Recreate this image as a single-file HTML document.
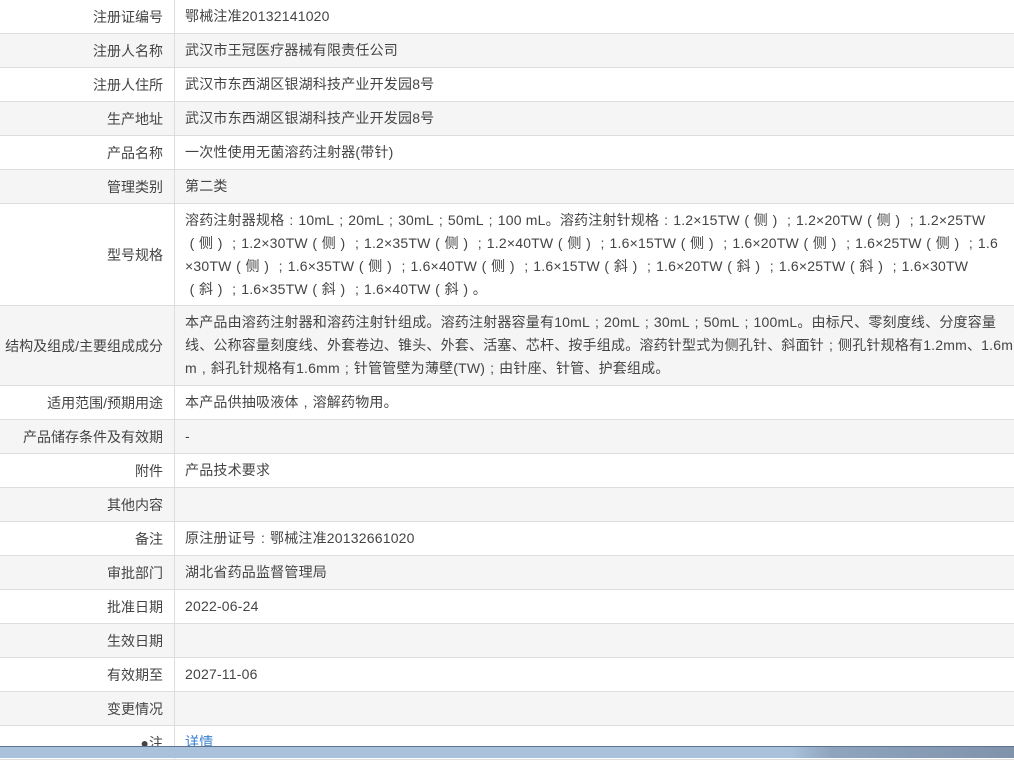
<!DOCTYPE html>
<html><head><meta charset="utf-8"><style>
*{margin:0;padding:0;box-sizing:border-box}
body{width:1014px;height:758px;overflow:hidden;background:#fff;font-family:"Liberation Sans","Noto Sans CJK SC",sans-serif;font-size:14px;color:#444;position:relative}
.r{display:flex;border-bottom:1px solid #ddd;height:34px}
.r:nth-child(even){background:#f5f5f5}
.l{width:175px;border-right:1px solid #ddd;text-align:right;padding-right:11px;display:flex;align-items:center;justify-content:flex-end;flex-shrink:0;white-space:nowrap}
.v{padding-left:10px;display:flex;align-items:center;line-height:23px;padding-right:0;white-space:nowrap;letter-spacing:0.2px}
i{font-style:normal;display:inline-block;width:14px;text-align:center}
.tb{position:absolute;left:0;top:746px;width:1014px;height:12px;background:linear-gradient(90deg,#a9c1db 0,#a9c1db 78%,#8fa4bd 82%,#7f93ab 100%);border-top:1px solid #5d7391}
</style></head><body>
<div>
<div class="r"><div class="l">注册证编号</div><div class="v">鄂械注准20132141020</div></div>
<div class="r"><div class="l">注册人名称</div><div class="v">武汉市王冠医疗器械有限责任公司</div></div>
<div class="r"><div class="l">注册人住所</div><div class="v">武汉市东西湖区银湖科技产业开发园8号</div></div>
<div class="r"><div class="l">生产地址</div><div class="v">武汉市东西湖区银湖科技产业开发园8号</div></div>
<div class="r"><div class="l">产品名称</div><div class="v">一次性使用无菌溶药注射器(带针)</div></div>
<div class="r"><div class="l">管理类别</div><div class="v">第二类</div></div>
<div class="r" style="height:102px"><div class="l">型号规格</div><div class="v"><div>溶药注射器规格<i>:</i>10mL<i>;</i>20mL<i>;</i>30mL<i>;</i>50mL<i>;</i>100 mL。溶药注射针规格<i>:</i>1.2×15TW<i>(</i>侧<i>)</i><i>;</i>1.2×20TW<i>(</i>侧<i>)</i><i>;</i>1.2×25TW<br><i>(</i>侧<i>)</i><i>;</i>1.2×30TW<i>(</i>侧<i>)</i><i>;</i>1.2×35TW<i>(</i>侧<i>)</i><i>;</i>1.2×40TW<i>(</i>侧<i>)</i><i>;</i>1.6×15TW<i>(</i>侧<i>)</i><i>;</i>1.6×20TW<i>(</i>侧<i>)</i><i>;</i>1.6×25TW<i>(</i>侧<i>)</i><i>;</i>1.6<br>×30TW<i>(</i>侧<i>)</i><i>;</i>1.6×35TW<i>(</i>侧<i>)</i><i>;</i>1.6×40TW<i>(</i>侧<i>)</i><i>;</i>1.6×15TW<i>(</i>斜<i>)</i><i>;</i>1.6×20TW<i>(</i>斜<i>)</i><i>;</i>1.6×25TW<i>(</i>斜<i>)</i><i>;</i>1.6×30TW<br><i>(</i>斜<i>)</i><i>;</i>1.6×35TW<i>(</i>斜<i>)</i><i>;</i>1.6×40TW<i>(</i>斜<i>)</i>。</div></div></div>
<div class="r" style="height:80px"><div class="l">结构及组成/主要组成成分</div><div class="v"><div>本产品由溶药注射器和溶药注射针组成。溶药注射器容量有10mL<i>;</i>20mL<i>;</i>30mL<i>;</i>50mL<i>;</i>100mL。由标尺、零刻度线、分度容量<br>线、公称容量刻度线、外套卷边、锥头、外套、活塞、芯杆、按手组成。溶药针型式为侧孔针、斜面针<i>;</i>侧孔针规格有1.2mm、1.6m<br>m<i>,</i>斜孔针规格有1.6mm<i>;</i>针管管壁为薄壁(TW)<i>;</i>由针座、针管、护套组成。</div></div></div>
<div class="r"><div class="l">适用范围/预期用途</div><div class="v">本产品供抽吸液体<i>,</i>溶解药物用。</div></div>
<div class="r"><div class="l">产品储存条件及有效期</div><div class="v">-</div></div>
<div class="r"><div class="l">附件</div><div class="v">产品技术要求</div></div>
<div class="r"><div class="l">其他内容</div><div class="v"></div></div>
<div class="r"><div class="l">备注</div><div class="v">原注册证号<i>:</i>鄂械注准20132661020</div></div>
<div class="r"><div class="l">审批部门</div><div class="v">湖北省药品监督管理局</div></div>
<div class="r"><div class="l">批准日期</div><div class="v">2022-06-24</div></div>
<div class="r"><div class="l">生效日期</div><div class="v"></div></div>
<div class="r"><div class="l">有效期至</div><div class="v">2027-11-06</div></div>
<div class="r"><div class="l">变更情况</div><div class="v"></div></div>
<div class="r"><div class="l">●注</div><div class="v" style="color:#3a7fd0">详情</div></div>
</div>
<div class="tb"></div>
</body></html>
